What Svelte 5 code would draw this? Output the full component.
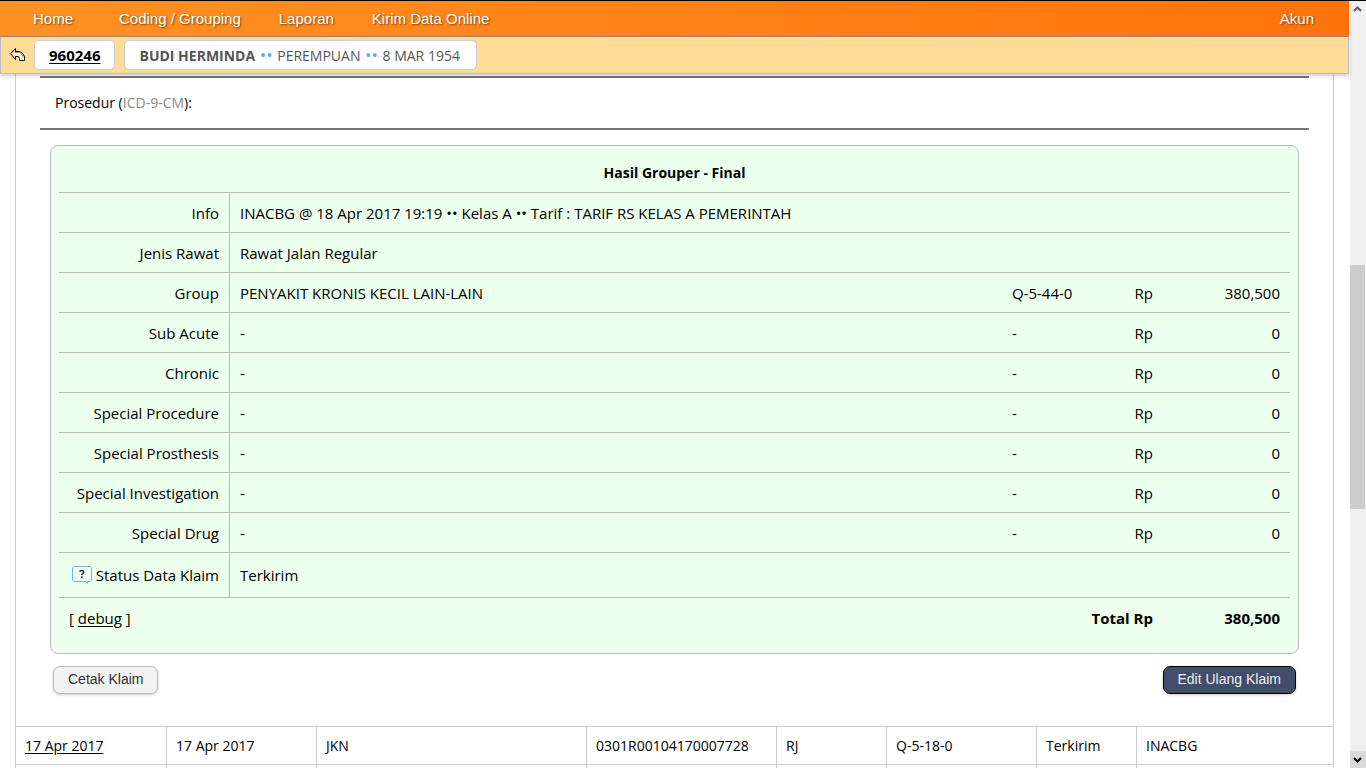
<script>
  const menu = ['Home', 'Coding / Grouping', 'Laporan', 'Kirim Data Online'];

  const components = [
    { label: 'Group', name: 'PENYAKIT KRONIS KECIL LAIN-LAIN', code: 'Q-5-44-0', amount: 380500 },
    { label: 'Sub Acute', name: '-', code: '-', amount: 0 },
    { label: 'Chronic', name: '-', code: '-', amount: 0 },
    { label: 'Special Procedure', name: '-', code: '-', amount: 0 },
    { label: 'Special Prosthesis', name: '-', code: '-', amount: 0 },
    { label: 'Special Investigation', name: '-', code: '-', amount: 0 },
    { label: 'Special Drug', name: '-', code: '-', amount: 0 }
  ];

  const total = components.reduce((sum, row) => sum + row.amount, 0);
  const format = (value) => value.toLocaleString('en-US');

  const claim = ['17 Apr 2017', 'JKN', '0301R00104170007728', 'RJ', 'Q-5-18-0', 'Terkirim', 'INACBG'];
</script>

<div class="window">
  <div class="page">
    <header>
      <nav>
        {#each menu as item}
          <a href="#menu">{item}</a>
        {/each}
        <a class="account" href="#account">Akun</a>
      </nav>
      <div class="patient">
        <button class="back" aria-label="Kembali">
          <svg width="16" height="14" viewBox="0 0 16 14">
            <path d="M0.5 5.5 L5.5 0.5 V3.5 H9.5 L12.5 5.5 L14.5 8.5 V12.5 H9.5 V10.5 L8.5 8.5 H5.5 V11.5 Z" fill="#fff2d6" stroke="#000" stroke-linejoin="round" />
            <path d="M2 5.5 L4.5 3 M5 4.5 H9.5 L12 6.5 L13.5 9.5" fill="none" stroke="#999" />
          </svg>
        </button>
        <a class="chip record" href="#record">960246</a>
        <div class="chip">
          <b>BUDI HERMINDA</b> <i>••</i> PEREMPUAN <i>••</i> 8 MAR 1954
        </div>
      </div>
    </header>

    <main>
      <section class="detail">
        <div class="procedure">Prosedur (<span>ICD-9-CM</span>):</div>

        <div class="panel">
          <table class="result">
            <colgroup>
              <col class="c-label" />
              <col />
              <col class="c-code" />
              <col class="c-currency" />
              <col class="c-amount" />
            </colgroup>
            <thead>
              <tr><th colspan="5">Hasil Grouper - Final</th></tr>
            </thead>
            <tbody>
              <tr>
                <th>Info</th>
                <td colspan="4">INACBG @ 18 Apr 2017 19:19 •• Kelas A •• Tarif : TARIF RS KELAS A PEMERINTAH</td>
              </tr>
              <tr>
                <th>Jenis Rawat</th>
                <td colspan="4">Rawat Jalan Regular</td>
              </tr>
              {#each components as row}
                <tr>
                  <th>{row.label}</th>
                  <td>{row.name}</td>
                  <td>{row.code}</td>
                  <td class="num">Rp</td>
                  <td class="num">{format(row.amount)}</td>
                </tr>
              {/each}
              <tr class="status">
                <th>
                  <div class="hint">
                    <svg width="20" height="18" viewBox="0 0 20 18">
                      <path d="M1.5 0.5 H18.5 L19.5 1.5 V14.5 L18.5 15.5 H15.5 V17.5 L13.5 15.5 H1.5 L0.5 14.5 V1.5 Z" fill="#f4fffa" stroke="#6fb7dc" />
                      <path d="M8 6 V5.5 Q8 4.5 9.7 4.5 Q11.7 4.5 11.7 6.1 Q11.7 7.2 10.6 7.8 Q9.8 8.3 9.8 9.2" fill="none" stroke="#333a44" stroke-width="1.6" />
                      <rect x="9" y="10.3" width="1.7" height="1.7" fill="#333a44" />
                    </svg>
                    Status Data Klaim
                  </div>
                </th>
                <td colspan="4">Terkirim</td>
              </tr>
            </tbody>
            <tfoot>
              <tr>
                <td colspan="2">[ <a href="#debug">debug</a> ]</td>
                <td class="num strong" colspan="2">Total Rp</td>
                <td class="num strong">{format(total)}</td>
              </tr>
            </tfoot>
          </table>
        </div>

        <div class="actions">
          <button class="print">Cetak Klaim</button>
          <button class="edit">Edit Ulang Klaim</button>
        </div>
      </section>

      <table class="claims">
        <colgroup>
          <col class="w151" />
          <col class="w150" />
          <col class="w270" />
          <col class="w190" />
          <col class="w110" />
          <col class="w150" />
          <col class="w100" />
          <col />
        </colgroup>
        <tbody>
          <tr>
            <td><a href="#claim">17 Apr 2017</a></td>
            {#each claim as value}
              <td>{value}</td>
            {/each}
          </tr>
          <tr>
            <td></td>
            {#each claim as _}
              <td></td>
            {/each}
          </tr>
        </tbody>
      </table>
    </main>
  </div>

  <div class="scrollbar" aria-hidden="true">
    <svg viewBox="0 0 16 16"><path d="M4 10 L7.5 6.5 L11 10" fill="none" stroke="#606060" stroke-width="2.2" /></svg>
    <div class="track"><div class="thumb"></div></div>
    <svg class="down" viewBox="0 0 16 17"><path d="M4 7 L7.5 10.5 L11 7" fill="none" stroke="#000" stroke-width="2.2" /></svg>
  </div>
</div>

<style>
  .window {
    display: flex;
    box-sizing: border-box;
    height: 100vh;
    overflow: hidden;
    border-top: 1px solid #000;
    background: #fff;
    color: #000;
    font: 14px/20px "Trebuchet MS", "Open Sans", sans-serif;
  }

  .page {
    flex: 1;
    min-width: 0;
  }

  a {
    color: inherit;
  }

  header {
    position: relative;
    box-shadow: 0 2px 4px rgba(0, 0, 0, 0.2);
  }

  nav {
    display: flex;
    align-items: center;
    gap: 38px;
    height: 35px;
    padding: 0 35px 0 33px;
    border-bottom: 1px solid #a9797a;
    background: linear-gradient(to right, #ff9123, #ff730c);
    font: 15px/18px "Liberation Sans", Arial, sans-serif;
  }

  nav a {
    color: #fff;
    text-decoration: none;
    text-shadow: 1px 1px 2px rgba(70, 35, 0, 0.75);
  }

  nav a:first-child {
    margin-right: 8px;
  }

  nav .account {
    margin-left: auto;
  }

  .patient {
    display: flex;
    align-items: center;
    height: 36px;
    padding-left: 9px;
    border: 1px solid #bbb;
    border-top: 0;
    background: #ffdb98;
  }

  .back {
    display: flex;
    width: 16px;
    margin-right: 8px;
    padding: 0;
    border: 0;
    background: none;
  }

  .chip {
    box-sizing: border-box;
    height: 30px;
    margin-right: 9px;
    padding: 4px 16px 4px 14px;
    border: 1px solid #ccc;
    border-radius: 5px;
    background: #fff;
    color: #555;
    white-space: nowrap;
  }

  .chip i {
    margin: 0 1px;
    color: #58aef2;
    font-size: 17px;
    font-style: normal;
  }

  .chip.record {
    padding: 4px 14px;
    color: #000;
    font-size: 15px;
    font-weight: 700;
  }

  a.record,
  .claims a,
  tfoot a {
    text-underline-offset: 2px;
  }

  main {
    margin: 0 15px;
    border: 1px solid #ccc;
    border-width: 0 1px;
  }

  .detail {
    padding: 2px 24px 32px;
  }

  .procedure {
    padding: 15px;
    border: 2px solid #777;
    border-width: 2px 0;
  }

  .procedure span {
    color: #888;
  }

  .panel {
    margin: 15px 10px 12px;
    padding: 7px 8px 15px;
    border: 1px solid #bbb;
    border-radius: 8px;
    background: #edffed;
  }

  table {
    width: 100%;
    border-collapse: separate;
    border-spacing: 0;
    table-layout: fixed;
  }

  td,
  th {
    box-sizing: border-box;
    height: 40px;
    padding: 0 10px;
    text-align: left;
    font-weight: 400;
    white-space: nowrap;
  }

  .result {
    font-size: 15px;
  }

  .result th,
  .result tbody td {
    border-bottom: 1px solid #bbb;
  }

  .result thead th {
    text-align: center;
    font-size: 14px;
    font-weight: 700;
  }

  .result tbody th {
    border-right: 1px solid #bbb;
    text-align: right;
  }

  .result .status th,
  .result .status td {
    height: 45px;
  }

  .result .num {
    text-align: right;
  }

  .result .strong {
    font-weight: 700;
  }

  .c-label {
    width: 171px;
  }

  .c-code {
    width: 94px;
  }

  .c-currency {
    width: 67px;
  }

  .c-amount {
    width: 127px;
  }

  .hint {
    display: flex;
    align-items: center;
    justify-content: flex-end;
    gap: 4px;
  }

  .actions {
    display: flex;
    justify-content: space-between;
    padding: 0 13px;
  }

  .actions button {
    height: 28px;
    padding: 0 14px 2px;
    border: 1px solid #bbb;
    border-radius: 7px;
    background: #f2f2f2;
    box-shadow: 0 1px 3px rgba(0, 0, 0, 0.2);
    color: #333;
    font: 14px/18px "Liberation Sans", Arial, sans-serif;
  }

  .actions .edit {
    border-color: #000;
    background: #414d6b;
    color: #eee;
  }

  .claims td {
    height: 38px;
    padding: 0 9px;
    border-top: 1px solid #ccc;
    border-right: 1px solid #ccc;
  }

  .claims td:last-child {
    border-right: 0;
  }

  .w100 {
    width: 100px;
  }

  .w110 {
    width: 110px;
  }

  .w150 {
    width: 150px;
  }

  .w151 {
    width: 151px;
  }

  .w190 {
    width: 190px;
  }

  .w270 {
    width: 270px;
  }

  .scrollbar {
    display: flex;
    flex-direction: column;
    width: 16px;
    border-left: 1px solid #fff;
    background: #f0f0f0;
  }

  .scrollbar svg {
    flex: none;
    width: 16px;
    height: 16px;
  }

  .scrollbar .down {
    height: 17px;
    background: #dadada;
  }

  .track {
    display: grid;
    flex: 1;
    grid-template-rows: 248fr 244fr 242fr;
  }

  .thumb {
    grid-row: 2;
    margin-right: 1px;
    background: #cdcdcd;
  }
</style>
